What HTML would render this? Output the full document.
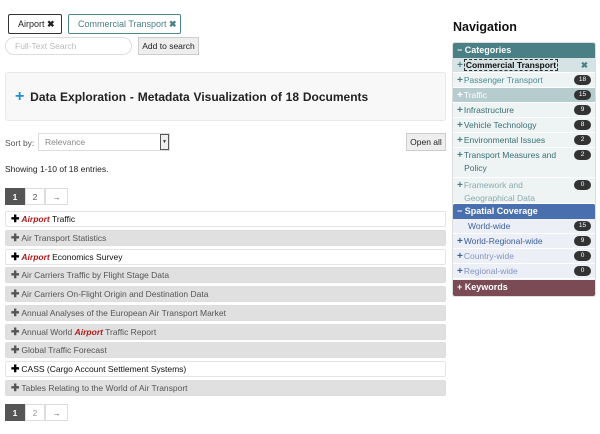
<!DOCTYPE html>
<html><head><style>
*{box-sizing:border-box;margin:0;padding:0}
body{width:600px;height:434px;background:#fff;font-family:"Liberation Sans",Arial,sans-serif;font-size:8.5px;color:#333;position:relative;overflow:hidden}
.a{position:absolute}
.tag{position:absolute;top:14px;height:20px;border:1px solid #333;border-radius:2px;font-size:9px;line-height:18px;padding:0 0 0 9px;color:#222;background:#fff;white-space:nowrap}
.row{position:absolute;left:5px;width:441px;height:16px;border-radius:2px;font-size:8.5px;line-height:15px;padding-left:5px;color:#555;background:#e0e0e0;border:1px solid #ddd;white-space:nowrap}
.row.w{background:#fff;color:#111;border:1px solid #e4e4e4}
.row b.p{color:#555;font-size:10px;margin-right:2px}
.row.w b.p{color:#000}
.ap{color:#b01818;font-style:italic;font-weight:bold}
.pg{position:absolute;left:5px;height:17px;display:flex;font-size:8.5px}
.pg span{display:block;height:17px;line-height:16px;text-align:center;border:1px solid #ddd;color:#555}
.nh{position:absolute;left:453px;width:142px;height:15px;color:#fff;font-weight:bold;font-size:9px;line-height:15px;padding-left:4px;border-radius:2px 2px 0 0}
.ni{position:absolute;left:453px;width:142px;font-size:8.5px;line-height:13px;padding:1px 24px 1px 4px;border-bottom:1px solid #fff;white-space:nowrap}
.ni .pl{font-weight:bold;font-size:10px;margin-right:1px}
.bd{position:absolute;right:4px;top:2px;background:#333;color:#fff;border-radius:6px;font-size:6.5px;line-height:10px;height:10px;width:17px;text-align:center}
</style></head><body>

<div class="tag" style="left:8px;width:54px">Airport <b>✖</b></div>
<div class="tag" style="left:68px;width:113px;border-color:#4a8a90;color:#4a7f85">Commercial Transport <b style="color:#4a7f85">✖</b></div>
<div class="a" style="left:5px;top:37px;width:127px;height:18px;border:1px solid #ddd;border-radius:9px;color:#bbb;line-height:16px;padding-left:9px">Full-Text Search</div>
<div class="a" style="left:138px;top:37px;width:61px;height:18px;border:1px solid #ccc;background:#eee;line-height:16px;text-align:center;color:#222;font-size:8.5px">Add to search</div>

<div class="a" style="left:5px;top:72px;width:441px;height:49px;background:#f8f8f8;border:1px solid #e8e8e8;border-radius:3px"></div>
<div class="a" style="left:15px;top:90px;font-size:12px;font-weight:bold;color:#222;white-space:nowrap;word-spacing:0.5px"><span style="color:#1a8fd8;font-size:16px;line-height:12px;margin-right:2px">+</span> Data Exploration - Metadata Visualization of 18 Documents</div>

<div class="a" style="left:5px;top:138px;color:#555">Sort by:</div>
<div class="a" style="left:38px;top:133px;width:132px;height:18px;border:1px solid #ddd;color:#888;line-height:16px;padding-left:6px">Relevance</div>
<div class="a" style="left:160px;top:134px;width:9px;height:16px;border:1px solid #555;background:#eee;font-size:5px;line-height:14px;text-align:center">▼</div>
<div class="a" style="left:406px;top:133px;width:40px;height:18px;border:1px solid #ccc;background:#eee;line-height:16px;text-align:center;color:#222">Open all</div>

<div class="a" style="left:5px;top:164px;color:#222">Showing 1-10 of 18 entries.</div>

<div class="pg" style="top:188px"><span style="width:20px;background:#555;color:#fff;border-color:#555;font-weight:bold">1</span><span style="width:20px">2</span><span style="width:23px">→</span></div>

<div class="row w" style="top:211px"><b class="p">✚</b><span class="ap">Airport</span> Traffic</div>
<div class="row" style="top:230px"><b class="p">✚</b>Air Transport Statistics</div>
<div class="row w" style="top:249px"><b class="p">✚</b><span class="ap">Airport</span> Economics Survey</div>
<div class="row" style="top:267px"><b class="p">✚</b>Air Carriers Traffic by Flight Stage Data</div>
<div class="row" style="top:286px"><b class="p">✚</b>Air Carriers On-Flight Origin and Destination Data</div>
<div class="row" style="top:305px"><b class="p">✚</b>Annual Analyses of the European Air Transport Market</div>
<div class="row" style="top:324px"><b class="p">✚</b>Annual World <span class="ap">Airport</span> Traffic Report</div>
<div class="row" style="top:342px"><b class="p">✚</b>Global Traffic Forecast</div>
<div class="row w" style="top:361px"><b class="p">✚</b>CASS (Cargo Account Settlement Systems)</div>
<div class="row" style="top:380px"><b class="p">✚</b>Tables Relating to the World of Air Transport</div>

<div class="pg" style="top:404px"><span style="width:20px;background:#555;color:#fff;border-color:#555;font-weight:bold">1</span><span style="width:20px;color:#999">2</span><span style="width:23px">→</span></div>

<div class="a" style="left:453px;top:20px;font-size:12.5px;font-weight:bold;color:#111">Navigation</div>
<div class="a" style="left:452px;top:42px;width:144px;height:255px;border:1px solid #ddd;border-radius:3px;background:#eef3f3"></div>

<div class="nh" style="top:43px;background:#4a7f85">− Categories</div>
<div class="ni" style="top:58px;height:15px;background:#d6e3e4;color:#111;font-weight:bold"><span class="pl" style="color:#4a7f85">+</span><span style="border:1px dashed #333;padding:0 1px">Commercial Transport</span><span style="position:absolute;right:7px;top:1px;color:#4a7f85">✖</span></div>
<div class="ni" style="top:73px;height:15px;color:#4a8a90;background:#eef3f3"><span class="pl" style="color:#4a7f85">+</span>Passenger Transport<span class="bd">18</span></div>
<div class="ni" style="top:88px;height:15px;color:#fff;background:#b7ccce"><span class="pl">+</span>Traffic<span class="bd">15</span></div>
<div class="ni" style="top:103px;height:15px;color:#3a6f75;background:#eef3f3"><span class="pl" style="color:#4a7f85">+</span>Infrastructure<span class="bd">9</span></div>
<div class="ni" style="top:118px;height:15px;color:#3a6f75;background:#eef3f3"><span class="pl" style="color:#4a7f85">+</span>Vehicle Technology<span class="bd">8</span></div>
<div class="ni" style="top:133px;height:15px;color:#3a6f75;background:#eef3f3"><span class="pl" style="color:#4a7f85">+</span>Environmental Issues<span class="bd">2</span></div>
<div class="ni" style="top:148px;height:30px;color:#3a6f75;background:#eef3f3"><span class="pl" style="color:#4a7f85">+</span>Transport Measures and<br>&nbsp;&nbsp;&nbsp;Policy<span class="bd">2</span></div>
<div class="ni" style="top:178px;height:26px;color:#8aaab0;background:#eef3f3;line-height:12px"><span class="pl" style="color:#4a7f85">+</span>Framework and<br>&nbsp;&nbsp;&nbsp;Geographical Data<span class="bd">0</span></div>

<div class="nh" style="top:204px;background:#4a6fae">− Spatial Coverage</div>
<div class="ni" style="top:219px;height:15px;color:#3a5fa0;background:#eceff6;padding-left:15px">World-wide<span class="bd">15</span></div>
<div class="ni" style="top:234px;height:15px;color:#3a5fa0;background:#eceff6"><span class="pl">+</span>World-Regional-wide<span class="bd">9</span></div>
<div class="ni" style="top:249px;height:15px;color:#8096c4;background:#eceff6"><span class="pl" style="color:#3a5fa0">+</span>Country-wide<span class="bd">0</span></div>
<div class="ni" style="top:264px;height:15px;color:#8096c4;background:#eceff6"><span class="pl" style="color:#3a5fa0">+</span>Regional-wide<span class="bd">0</span></div>

<div class="nh" style="top:280px;height:16px;background:#7a4a55;border-radius:0 0 2px 2px">+ Keywords</div>

</body></html>
